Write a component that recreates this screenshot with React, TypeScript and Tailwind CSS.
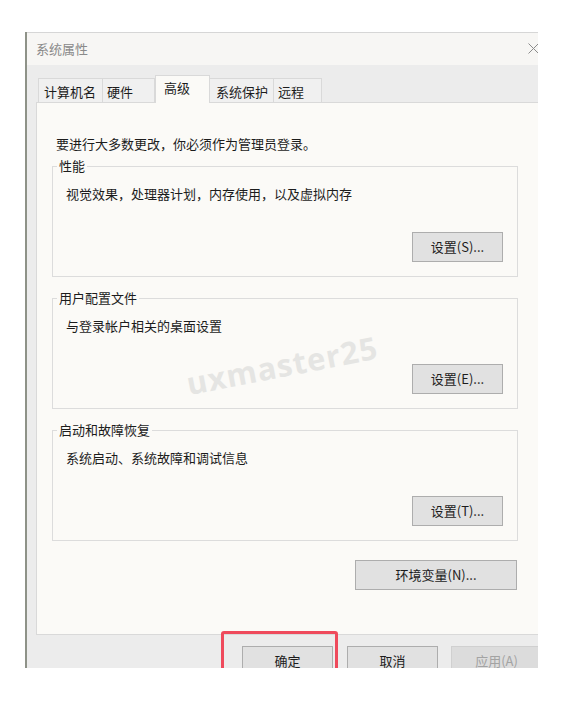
import React from "react";

const font = { fontFamily: '"Noto Sans CJK SC", "Noto Sans", sans-serif' };

function Btn({ label, w, disabled }: { label: string; w: string; disabled?: boolean }) {
  return (
    <div
      className={`${w} h-[30px] flex items-center justify-center border text-[13px] leading-[18px] ${
        disabled
          ? "bg-[#dcdcdc] border-[#d0d0d0] text-[#a3a3a3]"
          : "bg-[#e1e1e1] border-[#adadad] text-[#1c1c1c]"
      }`}
    >
      {label}
    </div>
  );
}

function Group({ title, desc, btn, mt }: { title: string; desc: string; btn: string; mt: string }) {
  return (
    <fieldset className={`${mt} ml-[15px] w-[466px] border border-[#dcdcdc] p-0 pb-[14px] m-0`}>
      <legend className="ml-[4px] px-[2px] text-[13px] leading-[18px] text-[#1c1c1c]">{title}</legend>
      <div className="mt-[10px] pl-[13px] text-[13px] leading-[18px] text-[#1c1c1c]">{desc}</div>
      <div className="mt-[29px] flex justify-end pr-[14px]">
        <Btn label={btn} w="w-[91px]" />
      </div>
    </fieldset>
  );
}

export default function App() {
  const tabs = [
    { t: "计算机名", w: "w-[65px]", pl: "pl-[5px]" },
    { t: "硬件", w: "w-[52px]", pl: "pl-[4px]" },
    { t: "高级", w: "w-[55px]", pl: "pl-[8px]", sel: true },
    { t: "系统保护", w: "w-[64px]", pl: "pl-[6px]" },
    { t: "远程", w: "w-[48px]", pl: "pl-[4px]" },
  ];
  return (
    <div className="w-[563px] h-[702px] bg-white overflow-hidden" style={font}>
      <div className="relative ml-[25px] mt-[32px] w-[513px] h-[636px] overflow-hidden border-l-2 border-[#8e9288] bg-[#ececec] flex flex-col">
        {/* title bar */}
        <div className="h-[33px] shrink-0 bg-[#f7f6f4] border-t border-[#d6d6d6] flex items-center justify-between pl-[9px]">
          <span className="text-[13px] leading-[18px] text-[#8a8a8a]">系统属性</span>
          <svg width="11" height="11" viewBox="0 0 11 11" className="-mr-[1px] mb-[2px]">
            <path d="M0.5 0.5 L10.5 10.5 M10.5 0.5 L0.5 10.5" stroke="#8c8c8c" strokeWidth="1" />
          </svg>
        </div>

        {/* body */}
        <div className="pl-[9px] flex flex-col">
          {/* tabs */}
          <div className="mt-[10px] ml-[2px] flex items-end">
            {tabs.map((tab) =>
              tab.sel ? (
                <div
                  key={tab.t}
                  className={`${tab.w} ${tab.pl} h-[28px] -mb-px relative z-10 bg-[#fbfaf7] border border-b-0 border-[#d9d9d9] text-[13px] leading-[18px] pt-[3px] text-[#1c1c1c]`}
                >
                  {tab.t}
                </div>
              ) : (
                <div
                  key={tab.t}
                  className={`${tab.w} ${tab.pl} h-[24px] bg-[#f0f0f0] border border-b-0 border-l-0 first:border-l border-[#d9d9d9] text-[13px] leading-[18px] pt-[4px] text-[#1c1c1c]`}
                >
                  {tab.t}
                </div>
              )
            )}
          </div>

          {/* panel */}
          <div className="w-[530px] h-[533px] bg-[#fbfaf7] border border-[#d9d9d9] flex flex-col">
            <div className="mt-[32px] ml-[19px] text-[13px] leading-[18px] text-[#1c1c1c]">
              要进行大多数更改，你必须作为管理员登录。
            </div>
            <Group mt="mt-[4px]" title="性能" desc="视觉效果，处理器计划，内存使用，以及虚拟内存" btn="设置(S)..." />
            <Group mt="mt-[12px]" title="用户配置文件" desc="与登录帐户相关的桌面设置" btn="设置(E)..." />
            <Group mt="mt-[12px]" title="启动和故障恢复" desc="系统启动、系统故障和调试信息" btn="设置(T)..." />
            <div className="mt-[19px] ml-[15px] w-[466px] flex justify-end pr-[1px]">
              <Btn label="环境变量(N)..." w="w-[162px]" />
            </div>
          </div>

          {/* bottom buttons */}
          <div className="mt-[11px] ml-[206px] flex">
            <div className="relative">
              <Btn label="确定" w="w-[91px]" />
              <div className="absolute -left-[21px] -top-[15px] w-[117px] h-[60px] border-[3px] border-[#ef4a5c] rounded-[3px]" />
            </div>
            <div className="ml-[14px]">
              <Btn label="取消" w="w-[91px]" />
            </div>
            <div className="ml-[13px]">
              <Btn label="应用(A)" w="w-[91px]" disabled />
            </div>
          </div>
        </div>

        {/* watermark */}
        <div
          className="absolute left-[158px] top-[310px] -rotate-[11deg] text-[31px] font-bold text-[#e5e5e3] tracking-[1px] pointer-events-none"
          style={{ fontFamily: '"Open Sans", sans-serif' }}
        >
          uxmaster25
        </div>
      </div>
    </div>
  );
}
